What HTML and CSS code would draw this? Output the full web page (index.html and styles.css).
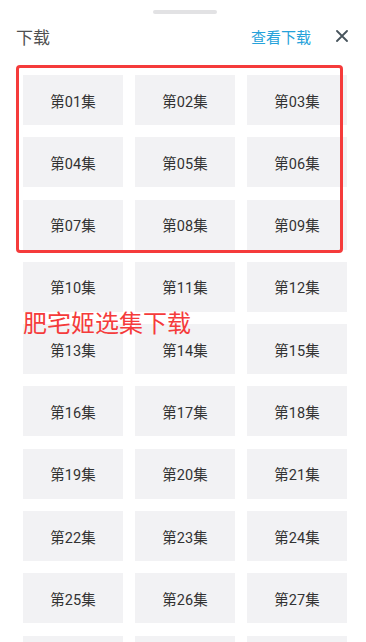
FILE: index.html
```html
<!DOCTYPE html>
<html lang="zh-CN">
<head>
  <meta charset="UTF-8">
  <meta name="viewport" content="width=device-width, initial-scale=1.0">
  <title>下载</title>
  <link rel="stylesheet" href="styles.css">
</head>
<body>

  <div class="sheet">
    <div class="handle"></div>

    <div class="header">
      <div class="title">下载</div>
      <a class="view-downloads" href="#">查看下载</a>
      <svg class="close" width="12" height="12" viewBox="0 0 12 12">
        <path d="M1 1L11 11M11 1L1 11" stroke="#47545c" stroke-width="1.8" stroke-linecap="round" fill="none"/>
      </svg>
    </div>

    <div class="episodes">
      <div class="ep">第01集</div>
      <div class="ep">第02集</div>
      <div class="ep">第03集</div>
      <div class="ep">第04集</div>
      <div class="ep">第05集</div>
      <div class="ep">第06集</div>
      <div class="ep">第07集</div>
      <div class="ep">第08集</div>
      <div class="ep">第09集</div>
      <div class="ep">第10集</div>
      <div class="ep">第11集</div>
      <div class="ep">第12集</div>
      <div class="ep">第13集</div>
      <div class="ep">第14集</div>
      <div class="ep">第15集</div>
      <div class="ep">第16集</div>
      <div class="ep">第17集</div>
      <div class="ep">第18集</div>
      <div class="ep">第19集</div>
      <div class="ep">第20集</div>
      <div class="ep">第21集</div>
      <div class="ep">第22集</div>
      <div class="ep">第23集</div>
      <div class="ep">第24集</div>
      <div class="ep">第25集</div>
      <div class="ep">第26集</div>
      <div class="ep">第27集</div>
      <div class="ep">第28集</div>
      <div class="ep">第29集</div>
      <div class="ep">第30集</div>
    </div>

    <!-- annotation drawn over the list -->
    <div class="mark-box"></div>
    <div class="mark-text">肥宅姬选集下载</div>
  </div>

</body>
</html>
```

FILE: styles.css
```css
html, body {
  margin: 0;
  padding: 0;
  height: 100%;
  overflow: hidden;
  background: #fff;
}

body {
  font-family: Roboto, "Noto Sans CJK SC", sans-serif;
  color: #333;
}

.sheet {
  position: relative;
  padding-top: 10px;
}

.handle {
  width: 64px;
  height: 4px;
  margin-left: 153px;
  border-radius: 2px;
  background: #e2e2e4;
}

.header {
  display: flex;
  align-items: center;
  height: 36px;
  margin-top: 4px;
  padding: 0 18px 0 16px;
}

.title {
  flex: 1;
  font-size: 17px;
  color: #505050;
}

.view-downloads {
  font-size: 15px;
  color: #26a2da;
  text-decoration: none;
  margin-right: 25px;
}

.close {
  display: block;
}

.episodes {
  display: grid;
  grid-template-columns: repeat(3, 100px);
  column-gap: 12px;
  row-gap: 12.3px;
  margin-top: 21px;
  padding-left: 23px;
}

.ep {
  height: 50px;
  display: flex;
  align-items: center;
  justify-content: center;
  background: #f2f2f4;
  font-size: 14.5px;
  color: #333;
}

.mark-box {
  position: absolute;
  left: 16px;
  top: 65px;
  width: 327px;
  height: 188px;
  box-sizing: border-box;
  border: 3px solid #f53b3b;
  border-radius: 4px;
}

.mark-text {
  position: absolute;
  left: 23px;
  top: 310px;
  font-size: 24px;
  line-height: 28px;
  color: #f53b3b;
}
```
